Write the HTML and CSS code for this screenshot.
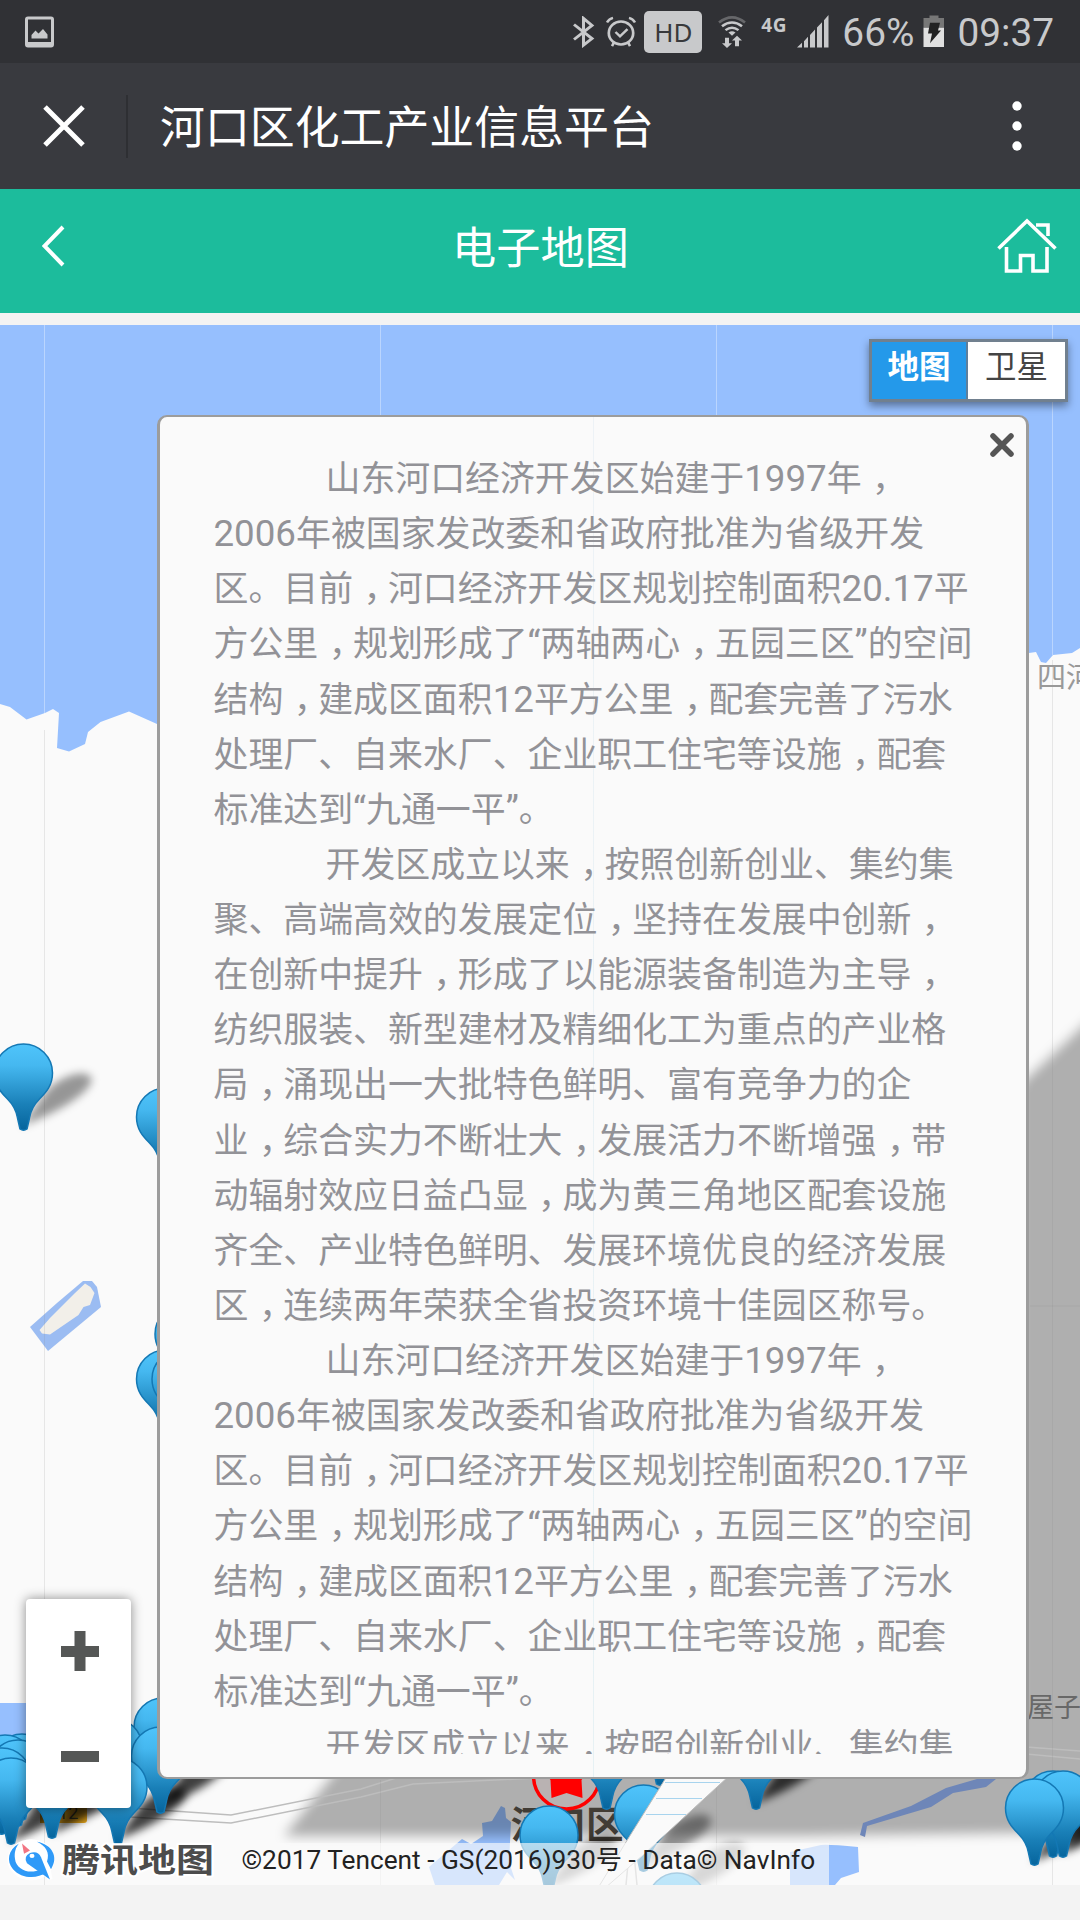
FILE: index.html
```html
<!DOCTYPE html>
<html lang="zh-CN">
<head>
<meta charset="utf-8">
<title>电子地图</title>
<link rel="stylesheet" href="styles.css">
</head>
<body>
<header class="status">
  <svg width="29" height="32" viewBox="0 0 29 32"><path fill="#c8c9cb" fill-rule="evenodd" d="M3 .5h23a3 3 0 0 1 3 3v25a3 3 0 0 1-3 3H3a3 3 0 0 1-3-3v-25a3 3 0 0 1 3-3zM3 3.500v22.500h23V3.500z"/><path fill="#c8c9cb" d="M6.500 22.500v-3.500l4-4.500 3 3 4.500-4.500 4.500 5.500v4z"/></svg>
  <div class="status-right">
    <svg width="22" height="32" viewBox="0 0 22 34" preserveAspectRatio="none"><path fill="none" stroke="#c8c9cb" stroke-width="3" d="M1 9l18 15-8.500 7V2.500L19 10 1 25"/></svg>
    <svg class="alarm" width="30" height="32" viewBox="0 0 30 34" preserveAspectRatio="none"><g fill="none" stroke="#c8c9cb"><circle cx="15" cy="18" r="12.200" stroke-width="2.700"/><path stroke-width="2.500" d="M1 7Q3 3 7 2M29 7q-2-4-6-5M8 28l-2 4M22 28l2 4"/><path stroke-width="2.500" d="M9.500 17l4.500 4.500 7.500-7.500"/></g></svg>
    <span class="hd">HD</span>
    <svg class="wifi" width="28" height="34" viewBox="0 0 28 36" preserveAspectRatio="none"><g fill="none" stroke="#c8c9cb" stroke-width="2.600"><path stroke="#66676a" d="M1 8Q14-3 27 8"/><path d="M4 12q10-8 20 0M7.500 16q6.500-5 13 0"/></g><path fill="#c8c9cb" d="M10.500 18.500q3.500-2.500 7 0L14 22zM7 24h4v6h3l-5 5-5-5h3zM17 33h4v-6h3l-5-5-5 5h3z"/></svg>
    <span class="net">4G</span>
    <svg class="signal" width="32" height="33" viewBox="0 0 32 34" preserveAspectRatio="none"><path fill="#c8c9cb" d="M0 33.500l5-5v5zM7 27l4-4.500v11H7zM13 20.500l5-5.500v18.500h-5zM20 13l5-5.500v26h-5zM27 5.500L31.500 0v33.500H27z"/></svg>
    <span class="num">66%</span>
    <svg class="battery" width="22" height="33" viewBox="0 0 22 34" preserveAspectRatio="none"><path fill="#777" d="M6.500.5h9V3H21v10H.5V3h6z"/><path fill="#e0e0e0" d="M.5 13H21v20H.5z"/><path fill="#222" d="M7 8h10l-2 8h3L7 29l2-10H5z"/></svg>
    <span class="num">09:37</span>
  </div>
</header>
<div class="titlebar">
  <svg width="42" height="42" viewBox="0 0 42 42"><path stroke="#fff" stroke-width="5" d="M2 2l38 38M40 2l-38 38"/></svg>
  <h1>河口区化工产业信息平台</h1>
  <svg width="10" height="52" viewBox="0 0 10 52"><g fill="#fff"><circle cx="5" cy="6" r="4.700"/><circle cx="5" cy="26" r="4.700"/><circle cx="5" cy="46" r="4.700"/></g></svg>
</div>
<nav class="nav">
  <svg width="24" height="42" viewBox="0 0 24 42"><path fill="none" stroke="#fff" stroke-width="4" d="M21 2L2.500 21 21 40"/></svg>
  <h2>电子地图</h2>
  <svg width="60" height="56" viewBox="0 0 60 56"><path fill="none" stroke="#fff" stroke-width="3.600" d="M1.500 30.500L30 3l28.500 27.500M39 7h12v11M9.500 29v24h14V37.500h12.500V53h14V29"/></svg>
</nav>
<main class="map">
  <svg class="canvas" width="1080" height="1560" viewBox="0 325 1080 1560">
    <defs>
      <linearGradient id="blue" x1="0" y1="0" x2="0" y2="1"><stop offset="0" stop-color="#4fc4fb"/><stop offset=".25" stop-color="#45b8f0"/><stop offset=".7" stop-color="#1a80b8"/><stop offset="1" stop-color="#06649c"/></linearGradient>
      <filter id="soft" x="-40%" y="-60%" width="180%" height="220%"><feGaussianBlur stdDeviation="4"/></filter>
      <filter id="wide" x="-10%" y="-10%" width="120%" height="120%"><feGaussianBlur stdDeviation="6"/></filter>
      <g id="pin"><path fill="url(#blue)" stroke="#1478b4" stroke-width="1.500" d="M0-86a29 29 0 0 1 29 29c0 12-6 19-13 26C9-24 7-18 6-12L3.500-1q-3.500 2.500-7 0L-6-12c-1-6-3-12-10-19-7-7-13-14-13-26a29 29 0 0 1 29-29z"/></g>
      <path id="fall" d="M-2-4L22-38C36-54 62-62 68-52 70-40 40-20-2-4z"/>
      <g id="shade" filter="url(#soft)"><use href="#fall" opacity=".4"/></g>
      <g id="dark" filter="url(#soft)"><use href="#fall" opacity=".75"/></g>
    </defs>
    <path fill="#fafafa" d="M0 325h1080v1560H0z"/>
    <path fill="#96bffe" d="M0 325h1080v323l-8 5-19 2-7 8-5-1-5-10-7 1-100-10H170l-13 81-28-12.500-28.500 10.500L88 732l-3 12-16 7.500-12-3.500 2-35-6-4-8 4-18.500 6.500L10 707l-10-3z"/>
    <path fill="#96bffe" d="M0 1703h120v60H0z"/>
    <path fill="#9bbcf2" d="M30 1327l27-24 26-22h9l5 6 4 20-53 44z"/>
    <path fill="#f2efe9" d="M39.500 1330l10.500-12 25-25 10-9.500 5.500 3.500 4 6-4.500 12-6.500 2-5 8-28.500 19.500-8-1z"/>
    <path fill="#96bffe" d="M482 1823l10-2 9-15 4 2 1 10 5 4-2 40 6 18-8-8-8 13h-64l-6-18 33-28 9 5 12-8zM790 1852l31-7q6-1 37 2l1 25-18 6-6 7h-45z"/>
    <g filter="url(#wide)"><path fill="#000" opacity=".3" d="M1100 1010L1020 1085V1700H400L340 1766 284 1836H800L1100 1832z"/></g>
    <path fill="#6e86b8" d="M977 1779h19l-10 8-33 6-22 14-64 19-2 11-5-2 3-12 48-17 35-18z"/>
    <g fill="none" stroke="#bdbdbd" stroke-width="1.500"><path d="M130 1808l101 7 130-26 35-11M130 1817l101 6 130-26 52-13 125-6M1026 1747l54 4M1026 1754l54 5M626 1885l4-42M637 1885l-4-42"/></g>
    <path stroke="#888" stroke-opacity=".18" d="M44.500 730v1156M380.500 1780v116M716.500 1780v116M1052.500 660v1226M1030 1306h50"/>
    <path stroke="#fff" stroke-opacity=".35" d="M44.500 325v390M380.500 325v100M716.500 325v100M1052.500 325v330"/>
    <path fill="#e9a81c" d="M40 1800h47v20q0 3-3 3H40z"/><text class="road" x="48" y="1819">312</text>
    <text class="place far" x="1037" y="675">四河</text>
    <text class="place near" x="1027" y="1705">屋子</text>
    <text class="city" x="511" y="1821">河口区</text>
    <circle cx="566.500" cy="1776" r="33" fill="#b9b2b2" stroke="#f00" stroke-width="3.500"/>
    <path fill="#f00" d="M566.500 1744l7 20h20l-12 16 1 18-16-5-15 5-1-18-12-16h20z"/>
    <use href="#shade" x="23.500" y="1130"/><use href="#shade" x="643" y="1871"/><use href="#shade" x="549" y="1892"/><use href="#shade" x="677" y="1900"/>
    <use href="#dark" x="11" y="1846"/><use href="#dark" x="52" y="1838"/><use href="#dark" x="118" y="1844"/><use href="#dark" x="160" y="1812"/><use href="#dark" x="756" y="1808"/><use href="#dark" x="1034" y="1866"/><use href="#dark" x="1063" y="1858"/>
    <use href="#pin" x="23.500" y="1130"/><use href="#pin" x="165.500" y="1174"/><use href="#pin" x="184" y="1391"/><use href="#pin" x="165.500" y="1436"/><use href="#pin" x="181" y="1436"/>
    <use href="#pin" x="163" y="1784"/><use href="#pin" x="113" y="1804"/><use href="#pin" x="160.500" y="1813"/>
    <use href="#pin" x="22" y="1820"/><use href="#pin" x="5" y="1821"/><use href="#pin" x="18" y="1826"/><use href="#pin" x="52" y="1838"/><use href="#pin" x="2" y="1834"/><use href="#pin" x="11" y="1844"/><use href="#pin" x="118" y="1844"/>
    <use href="#pin" x="606.500" y="1809"/><use href="#pin" x="660" y="1785"/><use href="#pin" x="756" y="1809"/><use href="#pin" x="549" y="1892"/><use href="#pin" x="643.500" y="1871"/><use href="#pin" x="677" y="1959"/>
    <use href="#pin" x="1053" y="1857"/><use href="#pin" x="1063" y="1857"/><use href="#pin" x="1034.500" y="1865"/>
    <path fill="#fafafa" stroke="#bbb" d="M667 1776l-41 66-28 46h7l38-33 86-79z"/>
    <path stroke="#a8d4ee" d="M665 1782.500h55M656 1798.500h46M646 1814.500h40"/>
  </svg>

  <div class="switch"><span class="on">地图</span><span>卫星</span></div>

  <section class="popup">
    <svg class="popup-close" width="26" height="26" viewBox="0 0 26 26"><path stroke="#555" stroke-width="5.500" stroke-linecap="round" d="M4 4l18 18M22 4L4 22"/></svg>
    <div class="scroll">
      <p>山东河口经济开发区始建于<b>1997</b>年<i>，</i><br><b>2006</b>年被国家发改委和省政府批准为省级开发<br>区。目前<i>，</i>河口经济开发区规划控制面积<b>20.17</b>平<br>方公里<i>，</i>规划形成了<b>“</b>两轴两心<i>，</i>五园三区<b>”</b>的空间<br>结构<i>，</i>建成区面积<b>12</b>平方公里<i>，</i>配套完善了污水<br>处理厂、自来水厂、企业职工住宅等设施<i>，</i>配套<br>标准达到<b>“</b>九通一平<b>”</b>。</p>
      <p>开发区成立以来<i>，</i>按照创新创业、集约集<br>聚、高端高效的发展定位<i>，</i>坚持在发展中创新<i>，</i><br>在创新中提升<i>，</i>形成了以能源装备制造为主导<i>，</i><br>纺织服装、新型建材及精细化工为重点的产业格<br>局<i>，</i>涌现出一大批特色鲜明、富有竞争力的企<br>业<i>，</i>综合实力不断壮大<i>，</i>发展活力不断增强<i>，</i>带<br>动辐射效应日益凸显<i>，</i>成为黄三角地区配套设施<br>齐全、产业特色鲜明、发展环境优良的经济发展<br>区<i>，</i>连续两年荣获全省投资环境十佳园区称号。</p>
      <p>山东河口经济开发区始建于<b>1997</b>年<i>，</i><br><b>2006</b>年被国家发改委和省政府批准为省级开发<br>区。目前<i>，</i>河口经济开发区规划控制面积<b>20.17</b>平<br>方公里<i>，</i>规划形成了<b>“</b>两轴两心<i>，</i>五园三区<b>”</b>的空间<br>结构<i>，</i>建成区面积<b>12</b>平方公里<i>，</i>配套完善了污水<br>处理厂、自来水厂、企业职工住宅等设施<i>，</i>配套<br>标准达到<b>“</b>九通一平<b>”</b>。</p>
      <p>开发区成立以来<i>，</i>按照创新创业、集约集</p>
    </div>
  </section>

  <div class="zoom">
    <svg width="38" height="40" viewBox="0 0 38 40"><path fill="#555756" d="M13.500 0h11v15H38v11H24.500v14h-11V26H0V15h13.500z"/></svg>
    <svg width="38" height="11" viewBox="0 0 38 11"><path fill="#555756" d="M0 0h38v11H0z"/></svg>
  </div>

  <svg class="logo" width="215" height="41" viewBox="0 0 215 48" preserveAspectRatio="none">
    <ellipse cx="24" cy="22" rx="23.500" ry="24" fill="#fff"/>
    <path fill="#fff" stroke="#fff" stroke-width="5" d="M36 34l7 11-3-18z"/>
    <path fill="#2f9af8" d="M12 3C1 10-1 24 6 33c8 11 24 12 33 4l-5-4C22 40 9 33 8 21 7 13 9 7 12 3zM30 1c15 3 22 18 14 32l-4-9C43 14 39 6 30 1z"/>
    <path fill="#2f9af8" d="M23 14q8-3 11 5l9 26-23-19q-4-8 3-12z"/><circle cx="25" cy="17.500" r="2.500" fill="#fff"/><path fill="#f27583" d="M15 3l8 8-6 4z"/>
    <text class="brand" x="55" y="36.500">腾讯地图</text>
  </svg>
  <div class="copyright">©2017 Tencent - GS(2016)930号 - Data© NavInfo</div>
</main>
</body>
</html>
```

FILE: styles.css
```css
* { box-sizing: border-box; }
body { margin: 0; width: 1080px; height: 1920px; overflow: hidden; background: #f3f3f3; font-family: Roboto, "Noto Sans CJK SC", sans-serif; display: flex; flex-direction: column; }
h1, h2, p { margin: 0; font-weight: 400; }
svg { display: block; flex: none; }

.status { height: 63px; flex: none; background: #303135; display: flex; align-items: center; justify-content: space-between; padding: 0 26px 0 25px; color: #c8c9cb; }
.status-right { display: flex; align-items: center; }
.alarm { margin: 0 8px 0 11px; }
.hd { width: 58px; height: 42px; border-radius: 5px; background: #c8c9cb; color: #38393c; font: 26px/42px "Noto Sans", sans-serif; text-align: center; }
.wifi { margin: 0 15px 0 16px; }
.net { font: 700 19px/20px "Noto Sans", sans-serif; width: 27px; margin-top: -14px; letter-spacing: .5px; }
.signal { margin: 0 13px 0 9px; }
.num { font-size: 38.800px; line-height: 61px; padding-top: 2px; }
.battery { margin: 0 12px 0 9px; }

.titlebar { height: 126px; flex: none; background: #393a3f; display: flex; align-items: center; padding: 0 58px 0 43px; }
.titlebar h1 { border-left: 2px solid #2e2f33; margin-left: 41px; padding-left: 32px; height: 63px; color: #fff; font: 44.900px/60px "Noto Sans CJK SC", sans-serif; flex: 1; }

.nav { height: 124px; flex: none; background: #1cbc9c; display: flex; align-items: center; justify-content: space-between; padding: 0 23px 10px 42px; }
.nav h2 { color: #fff; font: 44.200px/112px "Noto Sans CJK SC", sans-serif; margin-left: 18px; margin-top: -3px; }

.map { position: relative; width: 1080px; height: 1560px; flex: none; margin-top: 12px; overflow: hidden; }
.canvas { position: absolute; inset: 0; }
.place { font-family: "Noto Sans CJK SC", sans-serif; dominant-baseline: central; }
.far { font-size: 29px; fill: #999; }
.near { font-size: 27px; fill: #686868; }
.city { font: 700 37.500px "Noto Sans CJK SC", sans-serif; fill: #413c35; dominant-baseline: central; }
.road { font: 18px Roboto, sans-serif; fill: #443; }

.switch { position: absolute; left: 869px; top: 14px; width: 199px; height: 63px; display: flex; border: 3px solid #71808f; background: #fff; box-shadow: 0 4px 8px rgba(0, 0, 0, .4); color: #444; font: 31.500px/44px "Noto Sans CJK SC", sans-serif; text-align: center; }
.switch span { flex: 1; }
.switch .on { flex: 0 0 96px; background: #2499ea; color: #fff; font-weight: 700; border-right: 2px solid #5d7f9c; }

.popup { position: absolute; left: 157px; top: 90px; width: 872px; height: 1364px; padding: 32px 30px 0 53.500px; border: 2px solid #9c9c9c; border-width: 2px 3px; border-radius: 10px; background: linear-gradient(#edf2f6, #e6f1f4) 433px 0 / 1px 100% no-repeat #fafafa; }
.popup-close { position: absolute; right: 11px; top: 15px; }
.scroll { height: 1305px; overflow: hidden; color: #929297; font: 34.900px/55.130px "Noto Sans CJK SC", sans-serif; white-space: nowrap; }
.scroll p { text-indent: 112px; }
.scroll b { font: 36.700px/1 Roboto, sans-serif; }
.scroll i { font-style: normal; font-feature-settings: "halt"; padding: 0 .2em 0 .3em; }

.zoom { position: absolute; left: 26px; top: 1274px; width: 105px; height: 209px; border-radius: 4px; background: #fff; box-shadow: 0 0 12px rgba(0, 0, 0, .45); display: flex; flex-direction: column; align-items: center; gap: 80px; padding: 32px 0 0 3px; }
.logo { position: absolute; left: 7px; top: 1516px; overflow: visible; }
.brand { font: 700 38px "Noto Sans CJK SC", sans-serif; fill: #4c4c4c; stroke: #fff; stroke-width: 5px; paint-order: stroke; stroke-linejoin: round; }
.copyright { position: absolute; left: 231px; top: 1518px; width: 598px; height: 42px; padding-left: 10.500px; background: rgba(250, 250, 250, .65); color: #222; font: 26.250px/34px Roboto, "Noto Sans CJK SC", sans-serif; white-space: nowrap; }
```
